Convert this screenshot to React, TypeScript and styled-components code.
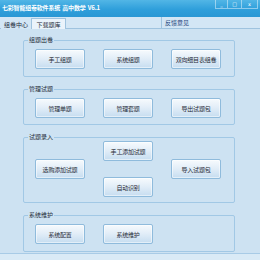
import { createGlobalStyle, styled } from "styled-components";

const GlobalStyle = createGlobalStyle`
  html, body {
    margin: 0;
    padding: 0;
    width: 260px;
    height: 260px;
    overflow: hidden;
    background: #cde2f2;
    font-family: "Noto Sans CJK SC", "Liberation Sans", sans-serif;
  }
`;

const Window = styled.div`
  width: 260px;
  height: 260px;
  display: flex;
  flex-direction: column;
  background: #cde2f2;
`;

const TitleBar = styled.div`
  height: 17px;
  flex: none;
  display: flex;
  align-items: flex-start;
  justify-content: space-between;
  background: linear-gradient(to bottom, #52b6e6 0%, #2f9fdb 55%, #2a97d4 100%);
`;

const Title = styled.div`
  color: #ffffff;
  font-size: 6px;
  font-weight: 700;
  line-height: 16px;
  padding-left: 2px;
  white-space: nowrap;
  letter-spacing: -0.2px;
`;

const WinButtons = styled.div`
  display: flex;
  padding-right: 2px;
`;

const WinButton = styled.div<{ $w: number }>`
  width: ${(p) => p.$w}px;
  height: 8px;
  border: 1px solid rgba(255, 255, 255, 0.45);
  border-top: none;
  border-left-width: 0;
  display: flex;
  align-items: center;
  justify-content: center;
  color: #ffffff;
  font-size: 5px;
  font-family: "DejaVu Sans", sans-serif;
  &:first-child {
    border-left-width: 1px;
  }
`;

const TabBar = styled.div`
  height: 12px;
  flex: none;
  display: flex;
  align-items: flex-end;
  background: #d3e6f5;
  border-bottom: 1px solid #9fc3df;
  box-sizing: border-box;
  padding-left: 1px;
`;

const Tab = styled.div<{ $active?: boolean; $w: number }>`
  width: ${(p) => p.$w}px;
  height: 11px;
  box-sizing: border-box;
  display: flex;
  align-items: center;
  justify-content: center;
  font-size: 6px;
  color: #1b2a3a;
  background: ${(p) => (p.$active ? "#eaf3fb" : "#d3e6f5")};
  border: 1px solid ${(p) => (p.$active ? "#9fc3df" : "transparent")};
  border-bottom: none;
  margin-bottom: -1px;
  white-space: nowrap;
`;

const Spacer = styled.div`
  width: 95px;
`;

const Feedback = styled.div`
  height: 11px;
  padding-left: 3px;
  border-left: 1px solid #9fc3df;
  display: flex;
  align-items: center;
  font-size: 6px;
  color: #1d3f7a;
`;

const Content = styled.div`
  flex: 1;
  display: flex;
  flex-direction: column;
  gap: 12px;
  padding: 11px 25px 0 23px;
`;

const Group = styled.div<{ $top?: number; $bottom?: number }>`
  position: relative;
  border: 1px solid #a1c8e5;
  border-radius: 2px;
  padding: ${(p) => p.$top ?? 8}px 12px ${(p) => p.$bottom ?? 7}px 11px;
`;

const Legend = styled.div`
  position: absolute;
  top: -5px;
  left: 4px;
  padding: 0 1px;
  background: #cde2f2;
  font-size: 6px;
  line-height: 8px;
  color: #1e2b38;
`;

const Grid = styled.div<{ $rows?: number }>`
  display: grid;
  grid-template-columns: 50px 50px 50px;
  grid-template-rows: repeat(${(p) => p.$rows ?? 1}, 20px);
  column-gap: 18px;
  row-gap: 16px;
  align-items: center;
`;

const Button = styled.div<{ $span?: number }>`
  grid-row: span ${(p) => p.$span ?? 1};
  align-self: center;
  height: 20px;
  box-sizing: border-box;
  border: 1px solid #8fbbdc;
  border-radius: 2px;
  background: linear-gradient(to bottom, #f6fafd 0%, #e3eef8 45%, #c6ddf0 100%);
  box-shadow: inset 0 0 0 1px rgba(255, 255, 255, 0.5);
  display: flex;
  align-items: center;
  justify-content: center;
  font-size: 6px;
  color: #1f2a36;
  white-space: nowrap;
  letter-spacing: -0.2px;
`;

const StatusBar = styled.div`
  height: 6px;
  flex: none;
  border-top: 1px solid #a8cbe6;
  background: #d9eaf6;
`;

export default function App() {
  return (
    <>
      <GlobalStyle />
      <Window>
        <TitleBar>
          <Title>七彩智能组卷软件系统&nbsp;&nbsp;高中数学&nbsp;&nbsp;V6.1</Title>
          <WinButtons>
            <WinButton $w={11}>_</WinButton>
            <WinButton $w={13}>□</WinButton>
            <WinButton $w={15}>x</WinButton>
          </WinButtons>
        </TitleBar>
        <TabBar>
          <Tab $w={30}>组卷中心</Tab>
          <Tab $w={35} $active>
            下载题库
          </Tab>
          <Spacer />
          <Feedback>反馈意见</Feedback>
        </TabBar>
        <Content>
          <Group>
            <Legend>组题出卷</Legend>
            <Grid>
              <Button>手工组题</Button>
              <Button>系统组题</Button>
              <Button>双向细目表组卷</Button>
            </Grid>
          </Group>
          <Group $bottom={6}>
            <Legend>管理试题</Legend>
            <Grid>
              <Button>管理单题</Button>
              <Button>管理套题</Button>
              <Button>导出试题包</Button>
            </Grid>
          </Group>
          <Group $top={3} $bottom={5}>
            <Legend>试题录入</Legend>
            <Grid $rows={2}>
              <Button $span={2}>选购添加试题</Button>
              <Button>手工添加试题</Button>
              <Button $span={2}>导入试题包</Button>
              <Button>自动识别</Button>
            </Grid>
          </Group>
          <Group>
            <Legend>系统维护</Legend>
            <Grid>
              <Button>系统配置</Button>
              <Button>系统维护</Button>
            </Grid>
          </Group>
        </Content>
        <StatusBar />
      </Window>
    </>
  );
}
